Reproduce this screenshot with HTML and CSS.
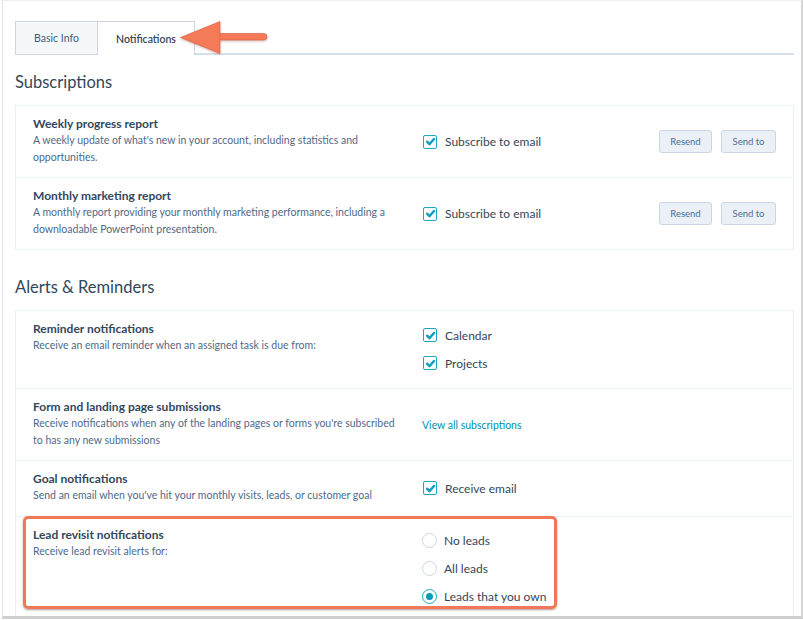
FILE: index.html
```html
<!DOCTYPE html>
<html>
<head>
<meta charset="utf-8">
<link rel="stylesheet" href="styles.css">
</head>
<body>
<div class="frame">
  <div class="tabs">
    <div class="tab">Basic Info</div>
    <div class="tab active">Notifications</div>
    <div class="tab-fill"></div>
  </div>

  <h2 class="section-title">Subscriptions</h2>
  <div class="card">
    <div class="row">
      <div class="info">
        <div class="title">Weekly progress report</div>
        <div class="desc">A weekly update of what's new in your account, including statistics and opportunities.</div>
      </div>
      <div class="controls center">
        <label class="opt"><span class="check"><svg viewBox="0 0 14 14"><path d="M3.3 7.2 L5.9 9.8 L10.8 4.3"/></svg></span>Subscribe to email</label>
        <div class="buttons"><span class="btn">Resend</span><span class="btn">Send to</span></div>
      </div>
    </div>
    <div class="row">
      <div class="info">
        <div class="title">Monthly marketing report</div>
        <div class="desc">A monthly report providing your monthly marketing performance, including a downloadable PowerPoint presentation.</div>
      </div>
      <div class="controls center">
        <label class="opt"><span class="check"><svg viewBox="0 0 14 14"><path d="M3.3 7.2 L5.9 9.8 L10.8 4.3"/></svg></span>Subscribe to email</label>
        <div class="buttons"><span class="btn">Resend</span><span class="btn">Send to</span></div>
      </div>
    </div>
  </div>

  <h2 class="section-title second">Alerts &amp; Reminders</h2>
  <div class="card">
    <div class="row">
      <div class="info">
        <div class="title">Reminder notifications</div>
        <div class="desc">Receive an email reminder when an assigned task is due from:</div>
      </div>
      <div class="controls stack">
        <label class="opt"><span class="check"><svg viewBox="0 0 14 14"><path d="M3.3 7.2 L5.9 9.8 L10.8 4.3"/></svg></span>Calendar</label>
        <label class="opt"><span class="check"><svg viewBox="0 0 14 14"><path d="M3.3 7.2 L5.9 9.8 L10.8 4.3"/></svg></span>Projects</label>
      </div>
    </div>
    <div class="row">
      <div class="info">
        <div class="title">Form and landing page submissions</div>
        <div class="desc">Receive notifications when any of the landing pages or forms you're subscribed to has any new submissions</div>
      </div>
      <div class="controls center">
        <a class="link">View all subscriptions</a>
      </div>
    </div>
    <div class="row">
      <div class="info">
        <div class="title">Goal notifications</div>
        <div class="desc">Send an email when you've hit your monthly visits, leads, or customer goal</div>
      </div>
      <div class="controls center">
        <label class="opt"><span class="check"><svg viewBox="0 0 14 14"><path d="M3.3 7.2 L5.9 9.8 L10.8 4.3"/></svg></span>Receive email</label>
      </div>
    </div>
    <div class="row">
      <div class="info">
        <div class="title">Lead revisit notifications</div>
        <div class="desc">Receive lead revisit alerts for:</div>
      </div>
      <div class="controls stack">
        <label class="opt"><span class="radio"></span>No leads</label>
        <label class="opt"><span class="radio"></span>All leads</label>
        <label class="opt"><span class="radio on"></span>Leads that you own</label>
      </div>
    </div>
  </div>

  <svg class="arrow" width="100" height="46" viewBox="175 15 100 46">
    <rect x="212" y="33.5" width="55" height="6.5" rx="3.2" fill="#f47a58" stroke="#d9603f" stroke-width="0.6"/>
    <polygon points="180.5,37.5 220,21.5 220,53.5" fill="#f47a58" stroke="#d9603f" stroke-width="0.6" stroke-linejoin="round"/>
  </svg>
  <div class="highlight"></div>
</div>
</body>
</html>
```

FILE: styles.css
```css
html, body {
  margin: 0;
  padding: 0;
  background: #ffffff;
}

body {
  font-family: "Lato", "Open Sans", sans-serif;
  color: #33475b;
}

.frame {
  position: relative;
  margin-left: 2px;
  border-left: 1px solid #e4e4e4;
  border-top: 1px solid #eeeeee;
  border-right: 2px solid #d6d6d6;
  border-bottom: 3px solid #cfcfcf;
  padding: 20px 7px 0 12px;
  box-sizing: border-box;
  width: 801px;
  height: 619px;
  overflow: hidden;
}

.tabs {
  display: flex;
  height: 34px;
}

.tab {
  box-sizing: border-box;
  height: 34px;
  display: flex;
  align-items: center;
  justify-content: center;
  font-size: 10.5px;
  color: #33475b;
}

.tab:first-child {
  width: 83px;
  background: #f5f8fa;
  border: 1px solid #cbd6e2;
  color: #425b76;
}

.tab.active {
  width: 97px;
  background: #ffffff;
  border-top: 1px solid #cbd6e2;
  border-right: 1px solid #cbd6e2;
  font-weight: 600;
  color: #33475b;
}

.tab-fill {
  flex: 1;
  border-bottom: 2px solid #d5dfe9;
}

.section-title {
  margin: 15px 0 0 0;
  font-size: 16.5px;
  line-height: 24px;
  font-weight: 400;
  color: #33475b;
}

.section-title.second {
  margin-top: 25px;
}

.card {
  margin-top: 11px;
  border: 1px solid #eaf0f6;
}

.row {
  display: flex;
  padding: 0 17px;
  border-top: 1px solid #eaf0f6;
}

.row:first-child {
  border-top: none;
}

.info {
  width: 389px;
  flex: none;
  padding: 9px 0 12px 0;
}

.title {
  font-size: 12px;
  line-height: 17px;
  font-weight: 700;
  color: #33475b;
}

.desc {
  font-size: 10.5px;
  line-height: 16.5px;
  color: #4f6a88;
  padding-right: 20px;
}

.controls {
  flex: 1;
  display: flex;
}

.controls.center {
  align-items: center;
  justify-content: space-between;
}

.controls.stack {
  flex-direction: column;
  padding: 10px 0 11px 0;
}

.opt {
  display: flex;
  align-items: center;
  height: 28px;
  font-size: 12px;
  color: #33475b;
}

.check {
  box-sizing: border-box;
  width: 14px;
  height: 14px;
  border: 1.5px solid #1ea7c4;
  border-radius: 2px;
  margin: 0 8px 0 1px;
  display: flex;
  align-items: center;
  justify-content: center;
  background: #fff;
}

.check svg {
  width: 13px;
  height: 13px;
  flex: none;
}

.check path {
  fill: none;
  stroke: #0fa0bd;
  stroke-width: 2.6;
  stroke-linecap: round;
  stroke-linejoin: round;
}

.radio {
  box-sizing: border-box;
  width: 15px;
  height: 15px;
  border-radius: 50%;
  border: 1px solid #cbd6e2;
  margin: 0 7px 0 0;
  background: #fff;
  position: relative;
}

.radio.on {
  border: 1.5px solid #1ea7c4;
}

.radio.on::after {
  content: "";
  position: absolute;
  left: 2.5px;
  top: 2.5px;
  width: 7px;
  height: 7px;
  border-radius: 50%;
  background: #0a9bb8;
}

.buttons {
  display: flex;
  gap: 9px;
}

.btn {
  box-sizing: border-box;
  height: 23px;
  display: flex;
  align-items: center;
  justify-content: center;
  background: #eaf0f6;
  border: 1px solid #cbd6e2;
  border-radius: 3px;
  font-size: 9.5px;
  color: #506e91;
}

.btn:first-child {
  width: 53px;
}

.btn:last-child {
  width: 55px;
}

.link {
  font-size: 10.5px;
  color: #0091ae;
  text-decoration: none;
}

.arrow {
  position: absolute;
  left: 172px;
  top: 14px;
  filter: drop-shadow(0 1px 1px rgba(120, 40, 20, 0.35));
}

.highlight {
  position: absolute;
  left: 20px;
  top: 515px;
  width: 534px;
  height: 93px;
  box-sizing: border-box;
  border: 3px solid #f2775a;
  border-radius: 5px;
  box-shadow: 0 1px 2px rgba(80, 30, 10, 0.45);
}
```
